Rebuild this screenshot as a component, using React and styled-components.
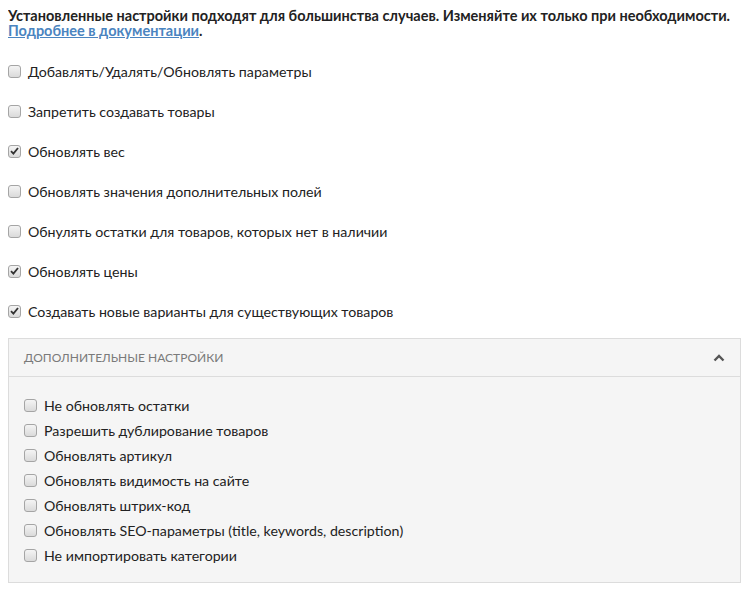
import styled, { createGlobalStyle } from "styled-components";

const GlobalStyle = createGlobalStyle`
  body {
    margin: 8px;
    font-family: Lato, "Open Sans", sans-serif;
    color: #222;
    background: #fff;
  }
`;

const Intro = styled.p`
  margin: 0;
  font-size: 14.5px;
  font-weight: 700;
  line-height: 15px;
`;

const DocLink = styled.a`
  color: #4a84c0;
  text-decoration: underline;
`;

const MainList = styled.div`
  display: flex;
  flex-direction: column;
  gap: 22px;
  margin-top: 25px;
`;

const Row = styled.label`
  display: flex;
  align-items: center;
  gap: 7px;
  font-size: 14.2px;
  line-height: 18px;
  color: #222;
`;

const Box = styled.span`
  width: 11px;
  height: 11px;
  flex: none;
  border: 1px solid #a5a5a5;
  border-radius: 3px;
  background: linear-gradient(#f4f4f4, #dadada);
  display: flex;
  align-items: center;
  justify-content: center;
  margin-top: -2px;
`;

const Panel = styled.div`
  margin-top: 17px;
  border: 1px solid #dcdcdc;
  background: #f5f5f5;
`;

const PanelHeader = styled.div`
  height: 37px;
  display: flex;
  align-items: center;
  justify-content: space-between;
  padding: 0 15px;
  border-bottom: 1px solid #dcdcdc;
  font-size: 12px;
  color: #7a7a7a;
  text-transform: uppercase;
`;

const PanelList = styled.div`
  display: flex;
  flex-direction: column;
  gap: 7px;
  padding: 20px 15px 17px;
`;

function Checkbox({ checked, children }) {
  return (
    <Row>
      <Box>
        {checked && (
          <svg width="9" height="8" viewBox="0 0 9 8">
            <path d="M1 4.2 L3.4 6.6 L8 1" fill="none" stroke="#333" strokeWidth="1.8" />
          </svg>
        )}
      </Box>
      {children}
    </Row>
  );
}

const mainOptions = [
  ["Добавлять/Удалять/Обновлять параметры", false],
  ["Запретить создавать товары", false],
  ["Обновлять вес", true],
  ["Обновлять значения дополнительных полей", false],
  ["Обнулять остатки для товаров, которых нет в наличии", false],
  ["Обновлять цены", true],
  ["Создавать новые варианты для существующих товаров", true],
];

const extraOptions = [
  "Не обновлять остатки",
  "Разрешить дублирование товаров",
  "Обновлять артикул",
  "Обновлять видимость на сайте",
  "Обновлять штрих-код",
  "Обновлять SEO-параметры (title, keywords, description)",
  "Не импортировать категории",
];

export default function App() {
  return (
    <>
      <GlobalStyle />
      <Intro>
        Установленные настройки подходят для большинства случаев. Изменяйте их только при необходимости.
        <br />
        <DocLink href="#">Подробнее в документации</DocLink>.
      </Intro>
      <MainList>
        {mainOptions.map(([text, checked]) => (
          <Checkbox key={text} checked={checked}>
            {text}
          </Checkbox>
        ))}
      </MainList>
      <Panel>
        <PanelHeader>
          Дополнительные настройки
          <svg width="12" height="8" viewBox="0 0 12 8">
            <path d="M1.5 6.5 L6 2 L10.5 6.5" fill="none" stroke="#555" strokeWidth="2.4" />
          </svg>
        </PanelHeader>
        <PanelList>
          {extraOptions.map((text) => (
            <Checkbox key={text}>{text}</Checkbox>
          ))}
        </PanelList>
      </Panel>
    </>
  );
}
